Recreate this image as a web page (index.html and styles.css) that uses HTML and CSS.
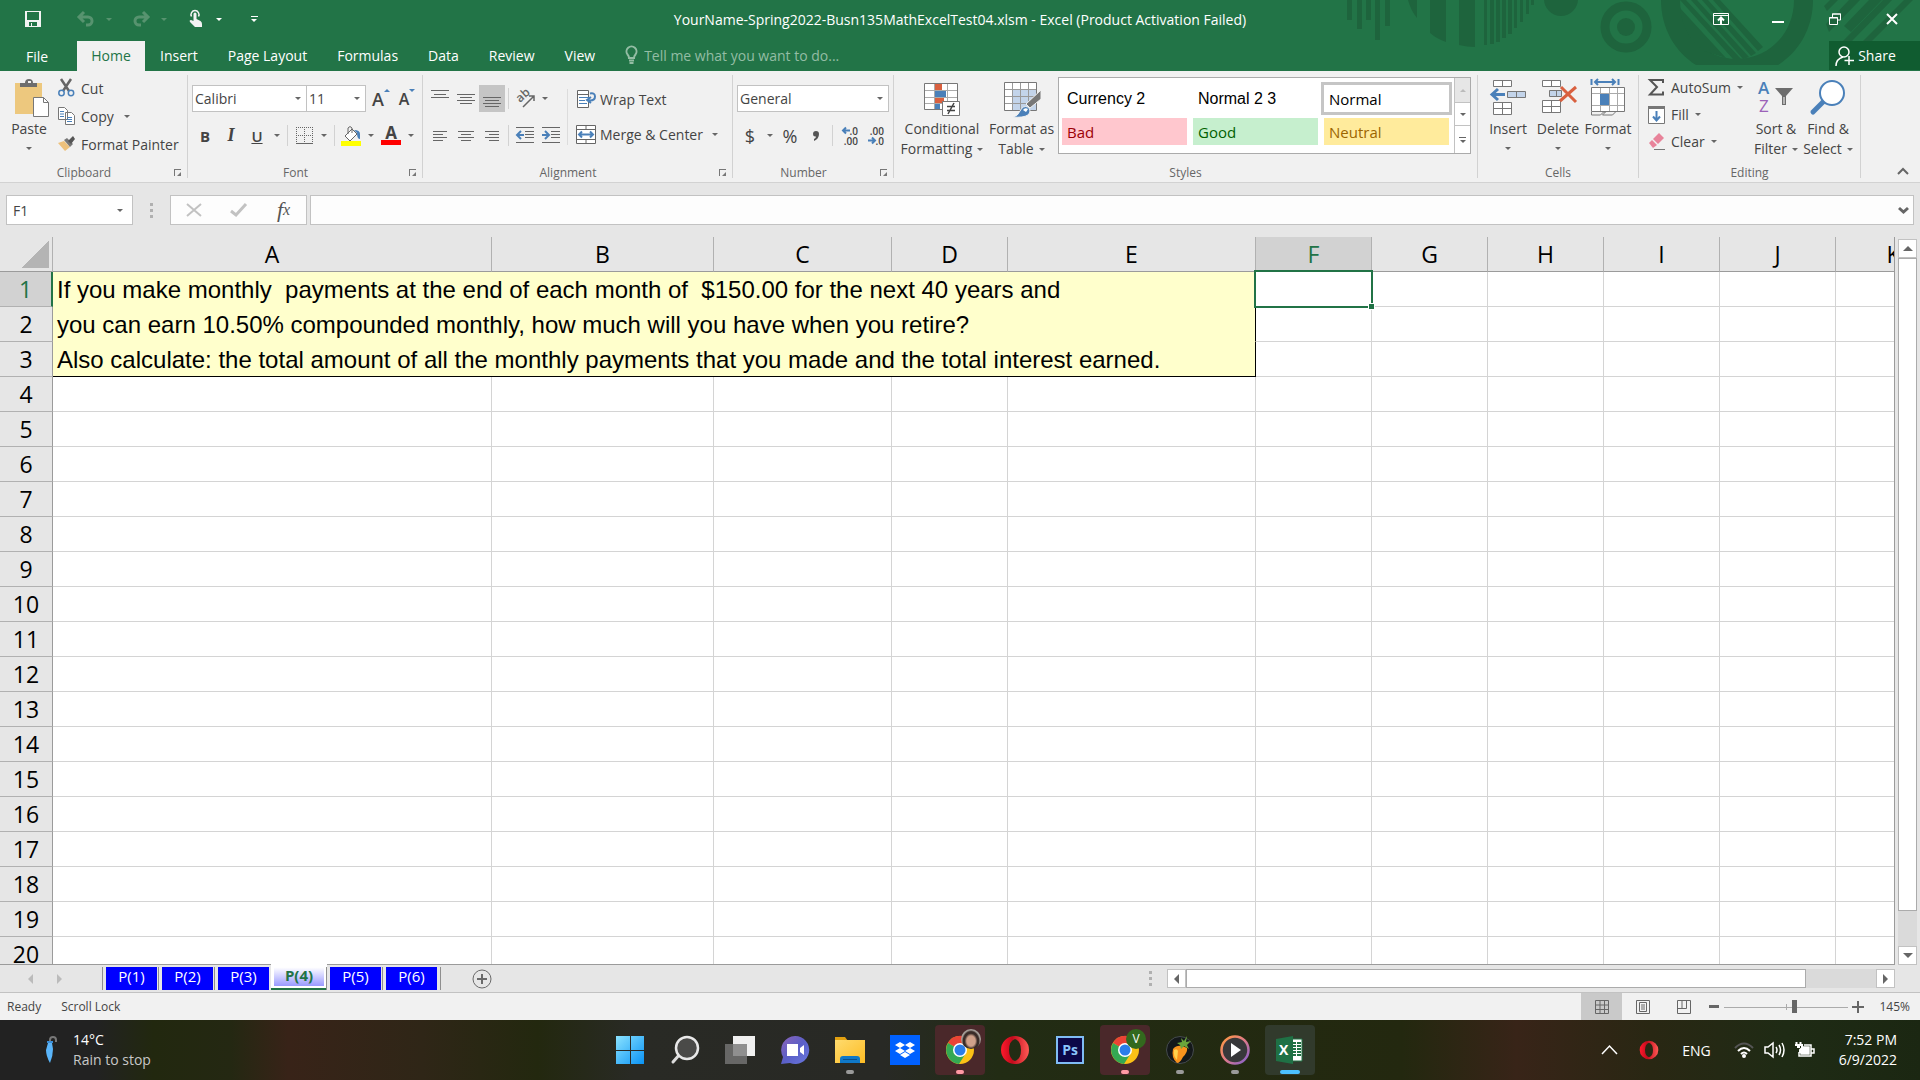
FILE: index.html
```html
<!DOCTYPE html>
<html lang="en">
<head>
  <meta charset="UTF-8">
  <meta name="viewport" content="width=device-width, initial-scale=1.0">
  <title>YourName-Spring2022-Busn135MathExcelTest04.xlsm - Excel</title>
  <link rel="stylesheet" href="styles.css">
</head>
<body>

  <header class="top">
    <!-- title bar pattern -->
    <svg class="art" width="580" height="71" viewBox="0 0 580 71" fill="#1e643d">
      <path d="M7 0h5v20h-5zM17 0h5v29h-5zM26 0h5v20h-5zM35 0h5v40h-5zM45 0h5v26h-5z"/>
      <path d="M68 0h9v18q-6-7-9-18zM90 0h16v42q-9-3-16-9zM119 0h16v47q-8 0-16-2z"/>
      <path d="M144 0h3v45h-3zM150 0h4v44h-4zM156 0h4v42h-4zM162 0h4v38h-4zM168 0h4v34h-4zM174 0h3v28h-3zM180 0h3v22h-3zM186 0h3v14h-3zM191 0h3v5h-3z"/>
      <circle cx="221" cy="-1" r="17"/>
      <circle cx="286" cy="27" r="21" fill="none" stroke="#1e643d" stroke-width="9"/>
      <circle cx="286" cy="27" r="9"/>
      <path d="M321 0c0 28 14 52 35 65h82c21-13 35-37 35-65h-19c0 33-25 59-57 59s-57-26-57-59z"/>
      <path d="M340 8l46 50-22-7q-21-15-24-43zM340 0h6l55 59h-8zM351 0h6l52 57-6 2zM362 0h6l48 53-5 3zM373 0h7l43 47-5 4z"/>
      <path d="M484 6l6-6h8l-11 11zM486 24l23-24h11l-31 32zM504 26l25-26h13l-31 32zM503 41l40-41h9l-40 41zM523 41l41-41h9l-41 41z"/>
    </svg>
    <div class="titlebar">
      <div class="qat">
        <button class="q-save" aria-label="Save"><svg width="16" height="16" viewBox="0 0 16 16"><path d="M0 0h16v16H0z" fill="#f3f3f3"/><path d="M2 1h12v8H2zM4 11h8v4H7v-3H6v3H4z" fill="#227447"/></svg></button>
        <button class="faded" aria-label="Undo"><svg width="18" height="16" viewBox="0 0 18 16" fill="none" stroke="currentColor" stroke-width="3"><path d="M2 6h9a4 4 0 0 1 0 8H9M7 1L2 6l5 5"/></svg></button>
        <button class="faded drop" aria-label="Undo list"><i class="caret"></i></button>
        <button class="faded" aria-label="Redo"><svg width="18" height="16" viewBox="0 0 18 16" fill="none" stroke="currentColor" stroke-width="3"><path d="M16 6H7a4 4 0 0 0 0 8h2M11 1l5 5-5 5"/></svg></button>
        <button class="faded drop" aria-label="Redo list"><i class="caret"></i></button>
        <button aria-label="Touch mode"><svg width="14" height="18" viewBox="0 0 14 18" fill="#f3f3f3"><path d="M4.500 4a1.500 1.500 0 0 1 3 0v5l4 2q1.500 1 1.500 3v3H6l-5-5q-1-2 1-2l2.500 1z"/><path d="M2.500 6.500a4 4 0 1 1 7 0" fill="none" stroke="#f3f3f3" stroke-width="1.500"/></svg></button>
        <button class="drop" aria-label="Touch mode list"><i class="caret"></i></button>
        <button class="q-more" aria-label="Customize Quick Access Toolbar"><i class="line"></i><i class="caret"></i></button>
      </div>
      <h1>YourName-Spring2022-Busn135MathExcelTest04.xlsm - Excel (Product Activation Failed)</h1>
      <div class="winbtns">
        <button aria-label="Ribbon Display Options"><svg width="16" height="12" viewBox="0 0 16 12" fill="none" stroke="#fff"><path d="M.5 .5h15v11H.5zM0 2.500h16"/><path d="M8 11V5M5 7.500L8 4.500l3 3" stroke-width="2"/></svg></button>
        <button aria-label="Minimize"><svg width="12" height="12" viewBox="0 0 12 12"><path d="M0 8h12v2H0z" fill="#fff"/></svg></button>
        <button aria-label="Restore Down"><svg width="12" height="12" viewBox="0 0 12 12" fill="none" stroke="#fff"><path d="M.5 4.500h8v7h-8zM3.500 4V1h8v6H9" /><path d="M0 5h9M3 1h9"/></svg></button>
        <button aria-label="Close"><svg width="12" height="12" viewBox="0 0 12 12" stroke="#fff" stroke-width="2"><path d="M1 1l10 10M11 1L1 11"/></svg></button>
      </div>
    </div>
    <nav class="tabs">
      <button class="file">File</button>
      <button class="current">Home</button>
      <button>Insert</button>
      <button>Page Layout</button>
      <button>Formulas</button>
      <button>Data</button>
      <button>Review</button>
      <button>View</button>
      <label class="tellme">
        <svg width="13" height="18" viewBox="0 0 13 18" fill="none" stroke="#93bda4" stroke-width="2"><path d="M4 12q0-2-1.500-3.500a5 5 0 1 1 8 0Q9 10 9 12zM4 14.500h5M4.500 17h4"/></svg>
        <input type="text" placeholder="Tell me what you want to do...">
      </label>
      <button class="share"><svg width="19" height="20" viewBox="0 0 19 20" fill="none" stroke="#fff" stroke-width="1.500"><circle cx="9" cy="6" r="5"/><path d="M1 20q0-7 7-9M14 10v9M9.500 14.500h9.500"/></svg>Share</button>
    </nav>
  </header>

  <div class="ribbon">
    <section class="group g-clipboard">
      <div class="body">
        <button class="big w-paste"><svg width="36" height="38" viewBox="0 0 36 38"><path d="M1 4h27v31H1z" fill="#edc87e"/><path d="M6 8V4h5q0-4 4-4t4 4h4v4z" fill="#6d6d6d"/><path d="M14 2h3v2h-3z" fill="#f1f1f1"/><path d="M19.500 18.500h10l5 5v14h-15z" fill="#fff" stroke="#777"/><path d="M29.500 18.500v5h5" fill="none" stroke="#777"/></svg><span>Paste</span><i class="caret"></i></button>
        <div class="stack">
          <button><svg width="17" height="18" viewBox="0 0 17 18" fill="none"><path d="M3 0l8 12M13 0L5 12" stroke="#666" stroke-width="2.500"/><circle cx="3.500" cy="14" r="2.700" stroke="#4a80b9" stroke-width="1.500"/><circle cx="13" cy="14" r="2.700" stroke="#4a80b9" stroke-width="1.500"/></svg>Cut</button>
          <button><svg width="17" height="18" viewBox="0 0 17 18" fill="#fff" stroke="#777"><path d="M.5 .5h6l3 3v9h-9zM7.500 5.500h6l3 3v9h-9z"/><path d="M2 4.500h4M2 7h4M2 9.500h4M9 10.500h5M9 12.500h5M9 14.500h5" stroke="#4a80b9"/></svg>Copy <i class="caret"></i></button>
          <button><svg width="17" height="16" viewBox="0 0 17 16"><path d="M0 7l6-2 6 6-5 4z" fill="#edc17c"/><path d="M6 4l3-2 6 6-3 3z" fill="#777"/><path d="M10 5l5-5 2 3-4 5z" fill="#555"/></svg>Format Painter</button>
        </div>
      </div>
      <footer>Clipboard<button class="launch" aria-label="Clipboard settings"></button></footer>
    </section>

    <section class="group g-font">
      <div class="body rows">
        <div class="row">
          <label class="combo c-font"><select aria-label="Font"><option>Calibri</option></select></label>
          <label class="combo c-size"><select aria-label="Font size"><option>11</option></select></label>
          <button class="tool grow" aria-label="Increase font size"><span>A</span><i class="tri-up"></i></button>
          <button class="tool grow small" aria-label="Decrease font size"><span>A</span><i class="tri-down"></i></button>
        </div>
        <div class="row">
          <button class="tool"><b>B</b></button>
          <button class="tool"><em>I</em></button>
          <button class="tool"><u>U</u></button>
          <button class="drop" aria-label="Underline list"><i class="caret"></i></button>
          <i class="sep"></i>
          <button class="tool" aria-label="Borders"><svg width="17" height="17" viewBox="0 0 17 17" stroke="#666" fill="none"><path d="M0 .5h17M.5 0v17M8.500 0v17M16.500 0v17M0 8.500h17" stroke-dasharray="1 1"/><path d="M0 16.500h17"/></svg></button>
          <button class="drop" aria-label="Borders list"><i class="caret"></i></button>
          <i class="sep"></i>
          <button class="tool" aria-label="Fill color"><svg width="20" height="20" viewBox="0 0 20 20"><path d="M4 10l7-7 5 5-7 7z" fill="#fff" stroke="#666"/><path d="M7 8V2q2-3 4 0v5" fill="none" stroke="#666"/><path d="M13 4q6 0 6 4v5q-3 0-3-6z" fill="#4a80b9"/><path d="M0 15h20v5H0z" fill="#ff0"/></svg></button>
          <button class="drop" aria-label="Fill color list"><i class="caret"></i></button>
          <button class="tool fontcolor" aria-label="Font color">A</button>
          <button class="drop" aria-label="Font color list"><i class="caret"></i></button>
        </div>
      </div>
      <footer>Font<button class="launch" aria-label="Font settings"></button></footer>
    </section>

    <section class="group g-align">
      <div class="body">
        <div class="rows aligners">
          <div class="row">
            <button class="tool" aria-label="Top align"><svg width="18" height="20" viewBox="0 0 18 20" stroke="#666"><path d="M0 1.500h18M3 5.500h12M0 8.500h18"/></svg></button>
            <button class="tool" aria-label="Middle align"><svg width="18" height="20" viewBox="0 0 18 20" stroke="#666"><path d="M0 5.500h18M3 8.500h12M0 11.500h18M3 14.500h12"/></svg></button>
            <button class="tool pressed" aria-label="Bottom align"><svg width="18" height="20" viewBox="0 0 18 20" stroke="#666"><path d="M0 8.500h18M2 11.500h14M0 14.500h18M2 17.500h14"/></svg></button>
            <i class="sep"></i>
            <button class="tool" aria-label="Orientation"><svg width="20" height="20" viewBox="0 0 20 20"><text x="5" y="14" transform="rotate(-42 5 14)" font-size="12" font-weight="600" font-family="Open Sans, sans-serif" fill="#666">ab</text><path d="M8 18L19 7M14 7h5v5" fill="none" stroke="#666" stroke-width="1.500"/></svg></button>
            <button class="drop" aria-label="Orientation list"><i class="caret"></i></button>
          </div>
          <div class="row">
            <button class="tool" aria-label="Align left"><svg width="14" height="12" viewBox="0 0 14 12" stroke="#666"><path d="M0 1.500h14M0 4.500h10M0 7.500h14M0 10.500h10"/></svg></button>
            <button class="tool" aria-label="Center"><svg width="16" height="12" viewBox="0 0 16 12" stroke="#666"><path d="M0 1.500h16M3 4.500h10M0 7.500h16M3 10.500h10"/></svg></button>
            <button class="tool" aria-label="Align right"><svg width="14" height="12" viewBox="0 0 14 12" stroke="#666"><path d="M0 1.500h14M4 4.500h10M0 7.500h14M4 10.500h10"/></svg></button>
            <i class="sep"></i>
            <button class="tool" aria-label="Decrease indent"><svg width="18" height="17" viewBox="0 0 18 17" stroke="#666" fill="none"><path d="M0 .5h18M9 4.500h9M9 7.500h9M9 10.500h9M0 15.500h18"/><path d="M8 8H1M5 4L1 8l4 4" stroke="#4a80b9" stroke-width="2"/></svg></button>
            <button class="tool" aria-label="Increase indent"><svg width="18" height="17" viewBox="0 0 18 17" stroke="#666" fill="none"><path d="M0 .5h18M9 4.500h9M9 7.500h9M9 10.500h9M0 15.500h18"/><path d="M0 8h7M3 4l4 4-4 4" stroke="#4a80b9" stroke-width="2"/></svg></button>
          </div>
        </div>
        <div class="rows">
          <div class="row"><button class="text"><svg width="20" height="18" viewBox="0 0 20 18" fill="none" stroke="#666"><path d="M1.500 .5h11v17h-11z" fill="#fff"/><path d="M1 4.500h12" /><path d="M3 7.500h12M3 10.500h6M3 13.500h8" stroke="#4a80b9"/><path d="M14 3.500q5-1 5 3t-5 4h-2M15 7l-4 3 4 3" stroke="#4a80b9" stroke-width="2"/></svg>Wrap Text</button></div>
          <div class="row"><button class="text"><svg width="20" height="19" viewBox="0 0 20 19" fill="#fff" stroke="#666"><path d="M.5 .5h19v18H.5zM.5 4.500h19M.5 14.500h19M10 0v4M10 15v4"/><path d="M3 9.500h14M6 6.500l-3 3 3 3M14 6.500l3 3-3 3" stroke="#4a80b9" stroke-width="2" fill="none"/></svg>Merge &amp; Center</button><button class="drop wide" aria-label="Merge list"><i class="caret"></i></button></div>
        </div>
      </div>
      <footer>Alignment<button class="launch" aria-label="Alignment settings"></button></footer>
    </section>

    <section class="group g-number">
      <div class="body rows">
        <div class="row"><label class="combo c-format"><select aria-label="Number format"><option>General</option></select></label></div>
        <div class="row">
          <button class="tool sign">$</button>
          <button class="drop" aria-label="Currency list"><i class="caret"></i></button>
          <button class="tool sign">%</button>
          <button class="tool comma" aria-label="Comma style"><svg width="6" height="10" viewBox="0 0 6 10"><path d="M0 3a3 3 0 0 1 6 0q0 5-5 7V8q2-1 2-2.500Q0 6 0 3z" fill="#555"/></svg></button>
          <i class="sep"></i>
          <button class="tool decimals" aria-label="Increase decimal"><span><svg width="8" height="7" viewBox="0 0 8 7" fill="none" stroke="#4a80b9" stroke-width="2"><path d="M8 3.500H1M4 .5l-3 3 3 3"/></svg>.0</span><span>.00</span></button>
          <button class="tool decimals" aria-label="Decrease decimal"><span>.00</span><span><svg width="8" height="7" viewBox="0 0 8 7" fill="none" stroke="#4a80b9" stroke-width="2"><path d="M0 3.500h7M4 .5l3 3-3 3"/></svg>.0</span></button>
        </div>
      </div>
      <footer>Number<button class="launch" aria-label="Number settings"></button></footer>
    </section>

    <section class="group g-styles">
      <div class="body">
        <button class="big w-cond"><svg width="38" height="38" viewBox="0 0 38 38"><path d="M1.500 4.500h33v26h-33z" fill="#fff" stroke="#777"/><path d="M2 11.500h32M2 18.500h32M2 24.500h32M11.500 5v25M24.500 5v25" stroke="#aaa"/><path d="M12 5h7v6h-7zM12 19h9v5h-9z" fill="#d9603f"/><path d="M12 12h11v6H12zM12 25h5v5h-5z" fill="#4a80b9"/><path d="M19.500 22.500h17v14h-17z" fill="#fff" stroke="#777"/><path d="M24 27.500h8M24 31.500h8M31 24l-6 11" stroke="#444" stroke-width="1.500"/></svg><span>Conditional</span><span>Formatting<i class="caret"></i></span></button>
        <button class="big w-table"><svg width="38" height="38" viewBox="0 0 38 38"><path d="M1.500 3.500h32v28h-32z" fill="#fff" stroke="#777"/><path d="M10 11h23v20H10z" fill="#c3d4ea"/><path d="M2 10.500h31M2 17.500h31M2 24.500h31M9.500 4v27M17.500 4v27M25.500 4v27" stroke="#999"/><path d="M38 11v9L27 29l-4-4z" fill="#777" stroke="#f1f1f1"/><path d="M10 38q5-1 7-6 3-6 8-4 4 4 0 8-5 3-15 2z" fill="#4a80b9" stroke="#f1f1f1"/><path d="M20 31q2-3 5-1l-2 3z" fill="#fff"/></svg><span>Format as</span><span>Table<i class="caret"></i></span></button>
        <div class="gallery">
          <div class="styles">
            <button class="s-plain">Currency 2</button>
            <button class="s-plain">Normal 2 3</button>
            <button class="s-normal">Normal</button>
            <button class="s-bad">Bad</button>
            <button class="s-good">Good</button>
            <button class="s-neutral">Neutral</button>
          </div>
          <div class="spin">
            <button class="off" aria-label="Scroll up"><i class="caret up"></i></button>
            <button aria-label="Scroll down"><i class="caret"></i></button>
            <button aria-label="More styles"><i class="line"></i><i class="caret"></i></button>
          </div>
        </div>
      </div>
      <footer>Styles</footer>
    </section>

    <section class="group g-cells">
      <div class="body">
        <button class="big w-cell"><svg width="38" height="38" viewBox="0 0 38 38" fill="#fff" stroke="#777"><path d="M4.500 1.500h18v6h-18zM13.500 1.500v6M4.500 23.500h18v12h-18zM4.500 29.500h18M13.500 23.500v12"/><path d="M18.500 12.500h18v6h-18zM27.500 12.500v6" fill="#c3d4ea"/><path d="M16 15.500H3M9 10l-6 5.500L9 21" stroke="#4a80b9" stroke-width="3" fill="none"/></svg><span>Insert</span><i class="caret"></i></button>
        <button class="big w-cell"><svg width="38" height="38" viewBox="0 0 38 38" fill="#fff" stroke="#777"><path d="M3.500 1.500h18v6h-18zM12.500 1.500v6M3.500 21.500h18v12h-18zM3.500 27.500h18M12.500 21.500v12"/><path d="M10.500 11.500h12v6h-12zM17.500 11.500v6" fill="#c3d4ea"/><path d="M22 8l15 15M37 8L21 22" stroke="#d9603f" stroke-width="3"/></svg><span>Delete</span><i class="caret"></i></button>
        <button class="big w-cell"><svg width="38" height="38" viewBox="0 0 38 38" fill="none" stroke="#777"><path d="M2.500 8.500h33v24h-33z" fill="#fff"/><path d="M3 14.500h32M3 26.500h32M11.500 9v23M20.500 9v23M28.500 9v23" stroke="#aaa"/><path d="M11 15h9v11h-9z" fill="#4a80b9" stroke="none"/><path d="M2.500 33v3h9l3-3h2l-3 3h10l3-3"/><path d="M2.500 0v6M29.500 0v6M6 3h20M9 0L6 3l3 3M23 0l3 3-3 3" stroke="#4a80b9" stroke-width="2"/></svg><span>Format</span><i class="caret"></i></button>
      </div>
      <footer>Cells</footer>
    </section>

    <section class="group g-editing">
      <div class="body">
        <div class="stack">
          <button><svg width="17" height="17" viewBox="0 0 17 17" fill="none" stroke="#555" stroke-width="2"><path d="M15 4V1H2l7 7-7 7.500h13v-3"/></svg>AutoSum <i class="caret"></i></button>
          <button><svg width="17" height="18" viewBox="0 0 17 18"><path d="M.5 .5h16v17H.5z" fill="#fff" stroke="#777"/><path d="M0 0h17v3H0z" fill="#777"/><path d="M8.500 5v9M5 10.500l3.500 4 3.500-4" fill="none" stroke="#4a80b9" stroke-width="2"/></svg>Fill<i class="caret"></i></button>
          <button><svg width="17" height="18" viewBox="0 0 17 18"><path d="M5 6l6-6 5 5-6 6z" fill="#e8839a"/><path d="M4 7l5 5-4 3-4-5z" fill="#e8839a"/><path d="M6 16.500h11" stroke="#777"/></svg>Clear<i class="caret"></i></button>
        </div>
        <button class="big w-edit"><svg width="38" height="38" viewBox="0 0 38 38"><text x="1" y="15" font-size="17" font-weight="600" font-family="Open Sans, sans-serif" fill="#4a80b9">A</text><text x="2" y="33" font-size="17" font-family="Open Sans, sans-serif" fill="#9b62b8">Z</text><path d="M18 9h18l-7 8v9h-4v-9z" fill="#6d6d6d"/><path d="M27 18v7" stroke="#fff"/></svg><span>Sort &amp;</span><span>Filter<i class="caret"></i></span></button>
        <button class="big w-edit"><svg width="38" height="38" viewBox="0 0 38 38"><path d="M4 33l10-10" stroke="#4a80b9" stroke-width="5" stroke-linecap="round"/><circle cx="23" cy="14" r="12" fill="#fff" stroke="#4a80b9" stroke-width="2"/></svg><span>Find &amp;</span><span>Select<i class="caret"></i></span></button>
      </div>
      <footer>Editing</footer>
    </section>
    <button class="collapse" aria-label="Collapse the ribbon"><svg width="12" height="8" viewBox="0 0 12 8" fill="none" stroke="#666" stroke-width="2"><path d="M1 7l5-5 5 5"/></svg></button>
  </div>

  <div class="formulabar">
    <label class="combo c-name"><input type="text" value="F1" aria-label="Name box"></label>
    <div class="grip"><i></i><i></i><i></i></div>
    <div class="fxbtns">
      <button aria-label="Cancel"><svg width="16" height="14" viewBox="0 0 16 14" stroke="#c2c2c2" stroke-width="2"><path d="M1 1l14 12M15 1L1 13"/></svg></button>
      <button aria-label="Enter"><svg width="17" height="14" viewBox="0 0 17 14" fill="none" stroke="#c2c2c2" stroke-width="3"><path d="M1 8l5 4L16 1"/></svg></button>
      <button class="fx" aria-label="Insert function">f<sub>x</sub></button>
    </div>
    <div class="formula">
      <input type="text" aria-label="Formula">
      <svg width="9" height="6" viewBox="0 0 9 6" fill="none" stroke="#666" stroke-width="3"><path d="M0 1l4.500 4L9 1"/></svg>
    </div>
  </div>

  <main>
    <div class="grid">
      <table>
        <colgroup>
          <col class="w-head"><col class="w-a"><col class="w-b"><col class="w-c"><col class="w-d"><col class="w-e"><col span="6" class="w-f">
        </colgroup>
        <thead>
          <tr>
            <th class="corner"></th>
            <th>A</th><th>B</th><th>C</th><th>D</th><th>E</th><th class="on">F</th><th>G</th><th>H</th><th>I</th><th>J</th><th>K</th>
          </tr>
        </thead>
        <tbody id="rows">
          <tr>
            <th class="on">1</th>
            <td colspan="5" class="note">If you make monthly&nbsp; payments at the end of each month of&nbsp; $150.00 for the next 40 years and</td>
            <td class="active"><i class="handle"></i></td><td></td><td></td><td></td><td></td><td></td>
          </tr>
          <tr>
            <th>2</th>
            <td colspan="5" class="note">you can earn 10.50% compounded monthly, how much will you have when you retire?</td>
            <td></td><td></td><td></td><td></td><td></td><td></td>
          </tr>
          <tr>
            <th>3</th>
            <td colspan="5" class="note last">Also calculate: the total amount of all the monthly payments that you made and the total interest earned.</td>
            <td></td><td></td><td></td><td></td><td></td><td></td>
          </tr>
        </tbody>
      </table>
    </div>
    <div class="vscroll">
      <button aria-label="Up"><i class="arrow up"></i></button>
      <div class="thumb"></div>
      <div class="track"></div>
      <button aria-label="Down"><i class="arrow down"></i></button>
    </div>
  </main>

  <div class="sheetbar">
    <div class="sheetnav"><i class="arrow left"></i><i class="arrow right"></i></div>
    <div class="sheets">
      <button>P(1)</button>
      <button>P(2)</button>
      <button>P(3)</button>
      <button class="current">P(4)</button>
      <button>P(5)</button>
      <button>P(6)</button>
    </div>
    <button class="newsheet" aria-label="New sheet"><svg width="20" height="20" viewBox="0 0 20 20" fill="none" stroke="#6a6a6a"><circle cx="10" cy="10" r="9"/><path d="M10 5v10M5 10h10" stroke-width="2"/></svg></button>
    <div class="grip"><i></i><i></i><i></i></div>
    <div class="hscroll">
      <button aria-label="Left"><i class="arrow left"></i></button>
      <div class="thumb"></div>
      <div class="track"></div>
      <button aria-label="Right"><i class="arrow right"></i></button>
    </div>
  </div>

  <div class="status">
    <span>Ready</span>
    <span>Scroll Lock</span>
    <div class="views">
      <button class="on" aria-label="Normal"><svg width="14" height="14" viewBox="0 0 14 14" fill="none" stroke="#666"><path d="M.5 .5h13v13H.5zM5 0v14M9.500 0v14M0 5h14M0 9.500h14"/></svg></button>
      <button aria-label="Page layout"><svg width="14" height="14" viewBox="0 0 14 14" fill="none" stroke="#666"><path d="M.5 .5h13v13H.5zM3.500 2.500h7v9h-7zM5 5h4M5 7h4M5 9h4"/></svg></button>
      <button aria-label="Page break preview"><svg width="14" height="14" viewBox="0 0 14 14" fill="none" stroke="#666"><path d="M.5 .5h13v13H.5zM.5 8.500h9V.5M5 0v8"/></svg></button>
    </div>
    <div class="zoom">
      <button aria-label="Zoom out"><svg width="10" height="10" viewBox="0 0 10 10"><path d="M0 3h10v3H0z" fill="#666"/></svg></button>
      <input type="range" min="0" max="100" value="57" aria-label="Zoom">
      <button aria-label="Zoom in"><svg width="12" height="12" viewBox="0 0 12 12"><path d="M0 5h5V0h2v5h5v2H7v5H5V7H0z" fill="#666"/></svg></button>
      <span>145%</span>
    </div>
  </div>

  <div class="taskbar">
    <svg width="0" height="0" class="defs">
      <defs>
        <linearGradient id="win" x1="0" y1="0" x2="1" y2="1"><stop offset="0" stop-color="#8be3ff"/><stop offset="1" stop-color="#0a93f5"/></linearGradient>
        <linearGradient id="chat" x1="0" y1="0" x2="1" y2="1"><stop offset="0" stop-color="#8d63b8"/><stop offset=".5" stop-color="#5a5fc7"/><stop offset="1" stop-color="#6a78e0"/></linearGradient>
        <linearGradient id="folder" x1="0" y1="0" x2="1" y2="1"><stop offset="0" stop-color="#ffdb6e"/><stop offset="1" stop-color="#fdbc24"/></linearGradient>
        <linearGradient id="media" x1="0" y1="0" x2="1" y2="1"><stop offset="0" stop-color="#ff9a3c"/><stop offset=".5" stop-color="#e07a8a"/><stop offset="1" stop-color="#7d5fd0"/></linearGradient>
        <linearGradient id="opera" x1="0" y1="0" x2="1" y2="0"><stop offset="0" stop-color="#ff1b2d"/><stop offset=".4" stop-color="#c40a1c"/><stop offset="1" stop-color="#ff5a55"/></linearGradient>
        <symbol id="i-opera" viewBox="0 0 30 30"><path fill-rule="evenodd" fill="url(#opera)" d="M15 1a14 14 0 1 1 0 28a14 14 0 1 1 0-28zM15 4q-6 2-6 11t6 11q6-2 6-11T15 4z"/></symbol>
        <symbol id="i-chrome" viewBox="0 0 30 30"><circle cx="15" cy="15" r="14" fill="#fbc116"/><path d="M15 15L3 8a14 14 0 0 1 24.500 0z" fill="#ea4335"/><path d="M15 15L3 8a14 14 0 0 0 11 21l7-11z" fill="#34a853"/><circle cx="15" cy="15" r="7" fill="#fff"/><circle cx="15" cy="15" r="5.500" fill="#2b7de9"/></symbol>
      </defs>
    </svg>
    <button class="weather">
      <svg width="12" height="28" viewBox="0 0 12 28"><path d="M5 6V4q0-3 3-3t3 3v2" fill="none" stroke="#777" stroke-width="2"/><path d="M3 7h4l1 6q0 7-3 14-4-7-4-13z" fill="#5ab5fa"/><path d="M2 6h6" stroke="#3b8fd8" stroke-width="2"/></svg>
      <span><b>14°C</b>Rain to stop</span>
    </button>
    <div class="apps">
      <button aria-label="Start"><svg width="30" height="30" viewBox="0 0 30 30" fill="url(#win)"><path d="M1 1h28v28H1z"/><path d="M15 1h1v28h-1zM1 15h28v1H1z" fill="#2a2a26"/></svg></button>
      <button aria-label="Search"><svg width="30" height="30" viewBox="0 0 30 30"><path d="M3 27l7-8" stroke="#ddd" stroke-width="3" stroke-linecap="round"/><circle cx="17" cy="13" r="11" fill="#4a4a48" stroke="#e8e8e8" stroke-width="2.500"/></svg></button>
      <button aria-label="Task view"><svg width="30" height="30" viewBox="0 0 30 30"><path d="M8 1h22v20H8z" fill="#f0f0f0"/><path d="M0 9h22v20H0z" fill="#777" fill-opacity=".8"/></svg></button>
      <button aria-label="Chat"><svg width="30" height="30" viewBox="0 0 30 30"><path d="M15 1a14 14 0 1 1-5 27l-9 1 2-7A14 14 0 0 1 15 1z" fill="url(#chat)"/><path d="M7 9h11v12H7zM20 13l4-3v10l-4-3z" fill="#fff"/></svg></button>
      <button class="open" aria-label="File Explorer"><svg width="30" height="30" viewBox="0 0 30 30"><path d="M0 2h10l3 4H0z" fill="#e2a010"/><path d="M0 5h30v23H0z" fill="url(#folder)"/><path d="M5 28v-4q0-3 3-3h14q3 0 3 3v4z" fill="#0f78c8"/><path d="M8 24.500h14" stroke="#0a4f8c"/></svg></button>
      <button aria-label="Dropbox"><svg width="30" height="30" viewBox="0 0 30 30"><path d="M0 0h30v30H0z" fill="#0061ff"/><path d="M10 7l5 3-5 3-5-3zM20 7l5 3-5 3-5-3zM10 13l5 3-5 3-5-3zM20 13l5 3-5 3-5-3zM15 17l5 3-5 3-5-3z" fill="#fff"/></svg></button>
      <button class="alert open" aria-label="Chrome"><svg width="30" height="30"><use href="#i-chrome"/></svg><i class="badge photo"></i></button>
      <button aria-label="Opera"><svg width="30" height="30"><use href="#i-opera"/></svg></button>
      <button class="ps" aria-label="Photoshop"><span>Ps</span></button>
      <button class="alert open" aria-label="Chrome, V"><svg width="30" height="30"><use href="#i-chrome"/></svg><i class="badge">V</i></button>
      <button class="open" aria-label="FL Studio"><svg width="30" height="30" viewBox="0 0 30 30"><circle cx="15" cy="15" r="13.500" fill="#14181a" stroke="#454b4d"/><path d="M8 14q5-6 14-1 1 4-4 9-3 6-6 6-6-5-4-14z" fill="#f8931d"/><path d="M9 15q3-2 4 1l-1 9q-4-4-3-10z" fill="#ffd24d"/><path d="M12 8l5-1-1-4 3 3 3-5-1 6 5-1-4 4 2 4-5-3-3 3-1-4z" fill="#6aa53b"/></svg></button>
      <button class="open" aria-label="Media Player"><svg width="30" height="30" viewBox="0 0 30 30"><circle cx="15" cy="15" r="13.500" fill="#38383a" stroke="url(#media)" stroke-width="2.500"/><path d="M11 8l10 7-10 7z" fill="#fff"/></svg></button>
      <button class="front" aria-label="Excel"><svg width="30" height="30" viewBox="0 0 30 30"><path d="M15 4h12v22H15z" fill="#fff" stroke="#207245"/><path d="M18 8h3M18 11h3M18 14h3M18 17h3M18 20h3M22 8h4M22 11h4M22 14h4M22 17h4M22 20h4" stroke="#207245" stroke-width="2"/><path d="M1 4l17-3v28L1 26z" fill="#1f7145"/><text x="4" y="20" font-size="14" font-weight="bold" font-family="Open Sans, sans-serif" fill="#fff">X</text></svg></button>
    </div>
    <div class="tray">
      <button class="t-more" aria-label="Hidden icons"><svg width="17" height="10" viewBox="0 0 17 10" fill="none" stroke="#fff" stroke-width="1.500"><path d="M1 9l7.500-8L16 9"/></svg></button>
      <button class="t-opera" aria-label="Opera"><svg width="20" height="20"><use href="#i-opera"/></svg></button>
      <button class="t-lang">ENG</button>
      <button class="t-net" aria-label="Network, sound, battery">
        <svg width="20" height="16" viewBox="0 0 20 16" fill="none" stroke="#fff" stroke-width="2"><path d="M1 6q9-9 18 0" stroke="#555"/><path d="M4 9q6-6 12 0M7 12q3-3 6 0"/><circle cx="10" cy="14" r="1" fill="#fff"/></svg>
        <svg width="21" height="18" viewBox="0 0 21 18" fill="none" stroke="#fff" stroke-width="1.500"><path d="M1 6h3l5-4v14l-5-4H1zM12 6q2 3 0 6M15 4q3 5 0 10M18 2q4 7 0 14"/></svg>
        <svg width="20" height="17" viewBox="0 0 20 17" fill="none" stroke="#fff" stroke-width="1.500"><path d="M9 3h7v11H4v-4M16 7h3v4h-3"/><path d="M8 5h6v7H6V9z" fill="#fff"/><path d="M0 3h7v3L5 8v3M1.500 0v3M5.500 0v3M2 5h3" stroke-width="2"/></svg>
      </button>
      <button class="clock">7:52 PM<br>6/9/2022</button>
    </div>
  </div>

  <script>
    // empty rows 4 - 20
    const tbody = document.getElementById('rows');
    for (let i = 4; i <= 20; i++) {
      const tr = document.createElement('tr');
      tr.innerHTML = `<th>${i}</th>` + '<td></td>'.repeat(11);
      tbody.appendChild(tr);
    }
  </script>
</body>
</html>
```
FILE: styles.css
```css
* {
  box-sizing: border-box;
}
body {
  margin: 0;
  height: 100vh;
  display: flex;
  flex-direction: column;
  overflow: hidden;
  font-family: "Open Sans", "Noto Sans", sans-serif;
  font-size: 14px;
  color: #444;
  background-color: #e6e6e6;
}
button, input, select {
  font: inherit;
  color: inherit;
  background: none;
  border: none;
  border-radius: 0;
  padding: 0;
  margin: 0;
  outline: none;
}
button {
  display: flex;
  align-items: center;
  justify-content: center;
  flex-shrink: 0;
  white-space: nowrap;
}
svg {
  display: block;
  flex-shrink: 0;
  overflow: visible;
}
.caret {
  display: inline-block;
  border: 3px solid transparent;
  border-top-color: #666;
  border-bottom-width: 0;
}
.caret.up {
  border-bottom: 3px solid #bbb;
  border-top-width: 0;
}
.line {
  width: 7px;
  height: 1px;
  background-color: #666;
}

/* title bar */
.top {
  position: relative;
  background-color: #227447;
  color: #fff;
}
.art {
  position: absolute;
  top: 0;
  right: 0;
  overflow: hidden;
}
.titlebar {
  position: relative;
  display: grid;
  grid-template-columns: 1fr auto 1fr;
  height: 41px;
}
.titlebar h1 {
  margin: 0;
  font-size: 14px;
  font-weight: normal;
  line-height: 40px;
}
.qat {
  display: flex;
  align-items: center;
  padding: 0 20px;
  height: 38px;
}
.qat button {
  width: 26px;
  margin-left: 11px;
  height: 26px;
}
.qat .q-save {
  margin: 0 16px 0 0;
}
.qat .drop {
  width: 16px;
  margin-left: 2px;
}
.top .caret {
  border-top-color: #fff;
}
.top .line {
  background-color: #fff;
}
.faded {
  color: #57936f;
}
.top .faded .caret {
  border-top-color: #57936f;
}
.qat .q-more {
  flex-direction: column;
  gap: 2px;
  margin-left: 14px;
}
.winbtns {
  display: flex;
  justify-content: flex-end;
  height: 38px;
}
.winbtns button {
  width: 57px;
}
.tabs {
  position: relative;
  display: flex;
  height: 30px;
}
.tabs button {
  padding: 0 15px 2px;
}
.tabs .file {
  width: 77px;
  padding: 0 3px 0 0;
}
.tabs .current {
  width: 68px;
  color: #227447;
  background-color: #f1f1f1;
}
.tellme {
  display: flex;
  align-items: center;
  gap: 6px;
  flex: 1;
  padding: 0 0 2px 15px;
}
.tellme input {
  flex: 1;
}
.tellme input::placeholder {
  color: #93bda4;
  opacity: 1;
}
.tabs .share {
  width: 91px;
  height: 29px;
  gap: 4px;
  padding: 0 18px 0 0;
  background-color: #105c30;
}

/* ribbon */
.ribbon {
  display: flex;
  height: 112px;
  padding: 4px 0;
  background-color: #f1f1f1;
  border-bottom: 1px solid #d2d2d2;
}
.group {
  display: flex;
  flex-direction: column;
  flex-shrink: 0;
  border-right: 1px solid #d2d2d2;
}
.g-clipboard { width: 188px; }
.g-font { width: 235px; }
.g-align { width: 310px; }
.g-number { width: 161px; }
.g-styles { width: 584px; }
.g-cells { width: 161px; }
.g-editing { width: 222px; }
.body {
  display: flex;
  height: 88px;
}
.group footer {
  position: relative;
  height: 15px;
  line-height: 20px;
  padding-right: 19px;
  text-align: center;
  font-size: 12px;
  color: #666;
}
.g-styles footer,
.g-cells footer,
.g-editing footer {
  padding: 0;
}
.launch {
  position: absolute;
  right: 6px;
  top: 6px;
  width: 7px;
  height: 7px;
  border-left: 1px solid #777;
  border-top: 1px solid #777;
}
.launch::after {
  content: "";
  position: absolute;
  left: 2px;
  top: 2px;
  border: 2px solid #777;
  border-left-color: transparent;
  border-top-color: transparent;
}
.big {
  flex-direction: column;
  justify-content: flex-start;
  padding-top: 4px;
}
.big svg {
  margin-bottom: 2px;
}
.big span {
  line-height: 20px;
}
.big span .caret {
  margin-left: 5px;
  vertical-align: 3px;
}
.big > .caret {
  margin-top: 8px;
}
.w-paste { width: 58px; }
.w-paste svg {
  margin-left: 6px;
}
.w-cond { width: 86px; }
.w-table { width: 73px; }
.w-cell { width: 50px; }
.w-edit { width: 52px; }
.stack {
  margin-top: -1px;
}
.stack button {
  height: 28px;
  gap: 6px;
}
.stack .caret {
  margin-left: 4px;
}
.g-editing .stack {
  width: 111px;
  padding-left: 9px;
}
.g-editing .stack button {
  height: 27px;
}
.g-editing .stack .caret {
  margin-left: 0;
}
.rows {
  flex-direction: column;
  padding-top: 10px;
}
.row {
  display: flex;
  height: 27px;
  margin-bottom: 10px;
}
.g-font .body {
  padding-left: 4px;
}
.tool {
  width: 26px;
}
.pressed {
  background-color: #c5c5c5;
}
.drop {
  width: 14px;
}
.sep {
  width: 1px;
  margin: 3px;
  background-color: #d2d2d2;
}
.combo {
  position: relative;
  display: flex;
  height: 27px;
  background-color: #fff;
  border: 1px solid #c2c2c2;
}
.combo::after {
  content: "";
  position: absolute;
  right: 5px;
  top: 11px;
  border: 3px solid transparent;
  border-top-color: #666;
  border-bottom-width: 0;
  pointer-events: none;
}
.combo select,
.combo input {
  appearance: none;
  width: 100%;
  padding-left: 2px;
}
.c-font {
  width: 115px;
}
.c-size {
  width: 60px;
  margin-left: -1px;
}
.c-format {
  width: 152px;
}
.grow {
  margin-left: 2px;
  font-size: 18px;
  font-weight: 600;
  line-height: 20px;
  align-items: flex-start;
  padding-top: 4px;
}
.grow.small {
  margin-left: 0;
  font-size: 16px;
}
.tri-up,
.tri-down {
  border: 3px solid transparent;
}
.tri-up {
  border-bottom-color: #4a80b9;
  border-top-width: 0;
}
.tri-down {
  border-top-color: #4a80b9;
  border-bottom-width: 0;
}
.tool em {
  font-family: "Liberation Serif", serif;
  font-size: 18px;
  font-weight: bold;
}
.tool b,
.tool u {
  font-size: 15px;
}
.tool u {
  font-weight: 600;
}
.tool.fontcolor {
  font-size: 17px;
  font-weight: bold;
  line-height: 15px;
  height: 20px;
  width: 20px;
  margin: 3px;
  align-items: flex-start;
  border-bottom: 5px solid #f00;
}
.aligners {
  width: 144px;
  padding-left: 4px;
}
.g-align .rows:last-child {
  margin: 14px 0 0;
  height: 56px;
  padding: 0 0 0 8px;
  border-left: 1px solid #dcdcdc;
}
.g-align .rows:last-child .row {
  height: 22px;
  margin-bottom: 14px;
  margin-top: -1px;
}
.text {
  gap: 4px;
}
.drop.wide {
  width: 24px;
}
.g-number .body {
  padding-left: 4px;
}
.sign {
  font-size: 18px;
}
.tool.decimals {
  flex-direction: column;
  align-items: flex-end;
  padding-right: 4px;
  font-size: 10px;
  font-weight: 600;
  line-height: 10px;
}
.decimals span {
  display: flex;
  align-items: center;
  height: 10px;
}
.g-styles .body,
.g-cells .body {
  padding-left: 5px;
}
.gallery {
  display: flex;
  width: 413px;
  height: 77px;
  margin-top: 2px;
  background-color: #fff;
  border: 1px solid #ababab;
}
.styles {
  display: grid;
  grid-template-columns: 125px 125px 125px;
  grid-template-rows: 27px 27px;
  gap: 6px;
  padding: 7px 5px 0 3px;
}
.styles button {
  justify-content: flex-start;
  padding-left: 5px;
  font-size: 15px;
}
.styles .s-plain {
  font-family: "Liberation Sans", sans-serif;
  font-size: 16px;
  color: #000;
}
.styles .s-normal {
  color: #000;
  box-shadow: 0 0 0 3px #c5c5c5;
}
.styles .s-bad {
  color: #9c0006;
  background-color: #ffc7ce;
}
.styles .s-good {
  color: #006100;
  background-color: #c6efce;
}
.styles .s-neutral {
  color: #9c6500;
  background-color: #ffeb9c;
}
.spin {
  flex: 1;
  display: grid;
  grid-template-rows: 25px 23px 1fr;
  border-left: 1px solid #c2c2c2;
}
.spin button {
  flex-direction: column;
  gap: 2px;
  border-bottom: 1px solid #c2c2c2;
}
.spin button:last-child {
  border-bottom: none;
}
.spin .off {
  background-color: #e6e6e6;
}
.collapse {
  align-self: flex-end;
  margin-left: auto;
  width: 34px;
  height: 14px;
}

/* formula bar */
.formulabar {
  display: flex;
  padding: 12px 6px;
  height: 54px;
}
.c-name {
  width: 127px;
  height: 30px;
}
.c-name::after {
  right: 9px;
  top: 13px;
}
.c-name input {
  padding-left: 6px;
}
.grip {
  display: flex;
  flex-direction: column;
  align-items: center;
  justify-content: center;
  gap: 3px;
  width: 37px;
}
.grip i {
  width: 3px;
  height: 3px;
  background-color: #b0b0b0;
}
.fxbtns {
  display: flex;
  width: 137px;
  background-color: #fdfdfd;
  border: 1px solid #c2c2c2;
}
.fxbtns button {
  flex: 1;
}
.fx {
  font-family: "Liberation Serif", serif;
  font-size: 22px;
  font-style: italic;
  color: #555;
}
.fx sub {
  font-size: 16px;
}
.formula {
  display: flex;
  align-items: center;
  flex: 1;
  margin-left: 3px;
  padding-right: 5px;
  background-color: #fdfdfd;
  border: 1px solid #c2c2c2;
}
.formula input {
  flex: 1;
}

/* cells */
main {
  display: flex;
  flex: 1;
  min-height: 0;
}
.grid {
  flex: 1;
  min-width: 0;
  overflow: hidden;
  border-right: 1px solid #9b9b9b;
  border-bottom: 1px solid #9b9b9b;
}
table {
  table-layout: fixed;
  width: 1952px;
  border-spacing: 0;
}
.w-head { width: 53px; }
.w-a { width: 439px; }
.w-b { width: 222px; }
.w-c { width: 178px; }
.w-d { width: 116px; }
.w-e { width: 248px; }
.w-f { width: 116px; }
th, td {
  height: 35px;
  padding: 0;
  line-height: 34px;
  white-space: nowrap;
}
th {
  font-size: 23px;
  font-weight: normal;
  color: #000;
  background-color: #e6e6e6;
  border-right: 1px solid #b1b1b1;
  border-bottom: 1px solid #9b9b9b;
}
tbody th {
  border-right-color: #9b9b9b;
  border-bottom-color: #b1b1b1;
}
th.on {
  color: #217346;
  background-color: #d2d2d2;
}
tbody th.on {
  border-right: 2px solid #217346;
}
.corner {
  background: linear-gradient(135deg, transparent 50%, #b4b4b4 50%) no-repeat 22px 4px / 27px 27px #e6e6e6;
}
td {
  position: relative;
  background-color: #fff;
  border-right: 1px solid #d4d4d4;
  border-bottom: 1px solid #d4d4d4;
}
td.note {
  padding: 2px 0 0 4px;
  line-height: 32px;
  font-family: "Liberation Sans", sans-serif;
  font-size: 24px;
  color: #000;
  background-color: #ffffcc;
  border-right-color: #000;
  border-bottom-color: #ffffcc;
}
td.last {
  border-bottom-color: #000;
}
td.active {
  z-index: 1;
}
td.active::before {
  content: "";
  position: absolute;
  inset: -2px -2px -2px -2px;
  border: 2px solid #217346;
}
.handle {
  position: absolute;
  right: -3px;
  bottom: -3px;
  width: 5px;
  height: 5px;
  background-color: #217346;
  box-shadow: 0 0 0 1px #fff;
}
.vscroll {
  display: flex;
  flex-direction: column;
  width: 25px;
  padding: 2px 3px 0;
}
.vscroll button,
.hscroll button {
  width: 19px;
  height: 19px;
  background-color: #fff;
  border: 1px solid #c2c2c2;
}
.thumb {
  background-color: #fff;
  border: 1px solid #ababab;
}
.track {
  background-color: #dadada;
}
.vscroll .thumb {
  flex: 653;
}
.vscroll .track {
  flex: 35;
}
.arrow {
  border: 5px solid transparent;
}
.arrow.up {
  border-bottom-color: #666;
  border-top-width: 0;
}
.arrow.down {
  border-top-color: #666;
  border-bottom-width: 0;
}
.arrow.left {
  border-right-color: #666;
  border-left-width: 0;
}
.arrow.right {
  border-left-color: #666;
  border-right-width: 0;
}

/* sheet tabs */
.sheetbar {
  display: flex;
  height: 28px;
  border-bottom: 1px solid #c2c2c2;
}
.sheetnav {
  display: flex;
  align-items: center;
  gap: 24px;
  width: 103px;
  padding-left: 28px;
}
.sheetnav .left {
  border-right-color: #bbb;
}
.sheetnav .right {
  border-left-color: #bbb;
}
.sheets {
  display: flex;
}
.sheets button {
  width: 51px;
  height: 23px;
  margin: 2px 2px 2px 3px;
  padding-bottom: 6px;
  font-size: 15px;
  color: #fff;
  background-color: #00f;
  box-shadow: -3px 0 0 #e6e6e6, -4px 0 0 #8f8f8f;
}
.sheets button:last-child {
  box-shadow: -3px 0 0 #e6e6e6, -4px 0 0 #8f8f8f, 3px 0 0 #e6e6e6, 4px 0 0 #8f8f8f;
}
.sheets .current {
  width: 56px;
  height: 24px;
  margin: -1px 0 0;
  padding-bottom: 0;
  font-weight: bold;
  color: #217346;
  background: linear-gradient(#fff 15%, #9a9aff);
  border: solid #fff;
  border-width: 0 3px 2px;
  box-shadow: 0 2px 0 #217346;
}
.newsheet {
  width: 20px;
  margin-left: 33px;
}
.sheetbar .grip {
  width: 33px;
  margin-left: auto;
}
.hscroll {
  display: flex;
  width: 728px;
  margin: 4px 25px 0 0;
  height: 19px;
}
.hscroll .thumb {
  flex: 620;
}
.hscroll .track {
  flex: 70;
}

/* status bar */
.status {
  display: flex;
  align-items: center;
  gap: 20px;
  height: 27px;
  padding: 0 10px 0 7px;
  font-size: 12px;
  background-color: #f1f1f1;
}
.views {
  display: flex;
  align-self: stretch;
  margin-left: auto;
}
.views button {
  width: 41px;
}
.views .on {
  background-color: #c9c9c9;
}
.zoom {
  display: flex;
  align-items: center;
  margin-left: -20px;
}
.zoom button {
  width: 20px;
}
.zoom input {
  appearance: none;
  width: 124px;
  height: 14px;
  background: linear-gradient(#ababab, #ababab) no-repeat 0 7px / 100% 1px, linear-gradient(#ababab, #ababab) no-repeat 62px 4px / 1px 6px;
}
.zoom input::-webkit-slider-thumb {
  appearance: none;
  width: 5px;
  height: 13px;
  background-color: #666;
}
.zoom span {
  width: 42px;
  text-align: right;
}

/* windows taskbar */
.taskbar {
  position: relative;
  display: flex;
  justify-content: space-between;
  height: 60px;
  color: #fff;
  background: linear-gradient(90deg, #222 5%, #22280f 8%, #242812 12%, #382318 15%, #2f2617 22%, #23280f 28%, #292a25 33%, #282925 46%, #222c14 52%, #23280f 73%, #382418 79%, #292713 86%, #1f2b15 93%, #1b2712);
}
.defs {
  position: absolute;
}
.weather {
  gap: 16px;
  padding-left: 45px;
  text-align: left;
  line-height: 20px;
  color: #c8c8c8;
}
.weather b {
  display: block;
  font-weight: normal;
  color: #fff;
}
.apps {
  position: absolute;
  left: 50%;
  top: 5px;
  display: flex;
  gap: 5px;
  transform: translateX(-50%);
}
.apps button {
  position: relative;
  width: 50px;
  height: 50px;
  border-radius: 4px;
}
.apps .alert {
  background-color: #4a282a;
}
.apps .front {
  background-color: #313a2c;
}
.open::after,
.front::after {
  content: "";
  position: absolute;
  left: 21px;
  bottom: 1px;
  width: 8px;
  height: 4px;
  border-radius: 2px;
  background-color: #9a9a9a;
}
.alert::after {
  background-color: #ff99a4;
}
.front::after {
  left: 15px;
  width: 20px;
  background-color: #4cc2ff;
}
.badge {
  position: absolute;
  right: 4px;
  top: 4px;
  width: 20px;
  height: 20px;
  border-radius: 50%;
  font-size: 12px;
  font-style: normal;
  line-height: 20px;
  text-align: center;
  background-color: #33691e;
}
.photo {
  background: radial-gradient(ellipse at 50% 60%, #d0a18a 0 30%, #3a2c28 45% 55%, #a59e98 65%);
}
.ps span {
  width: 28px;
  height: 28px;
  line-height: 24px;
  font-weight: bold;
  color: #8bc5fb;
  background-color: #0c0748;
  border: 2px solid #7fbcf5;
}
.tray {
  display: flex;
  padding-right: 23px;
}
.t-more { width: 40px; }
.t-opera { width: 40px; }
.t-lang { width: 55px; }
.t-net {
  gap: 10px;
  width: 100px;
}
.clock {
  width: 73px;
  justify-content: flex-end;
  text-align: right;
  line-height: 20px;
}
```
